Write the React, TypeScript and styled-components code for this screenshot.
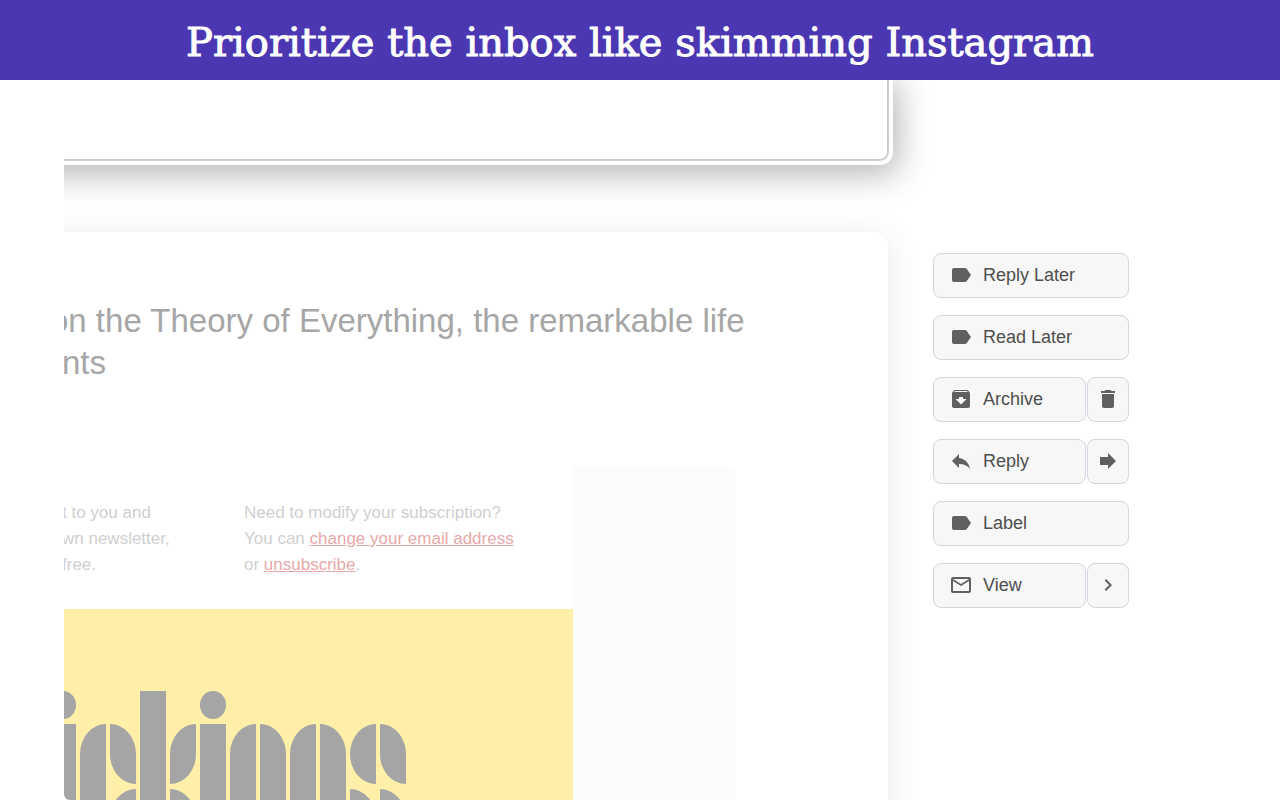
import React from 'react';
import styled, { createGlobalStyle, css } from 'styled-components';
import {
  MdArchive,
  MdChevronRight,
  MdDelete,
  MdForward,
  MdLabel,
  MdMailOutline,
  MdReply,
} from 'react-icons/md';
import type { IconType } from 'react-icons';

const GlobalStyle = createGlobalStyle`
  *, *::before, *::after { box-sizing: border-box; }
  body {
    margin: 0;
    background: #fff;
    font-family: "Liberation Sans", Arial, sans-serif;
  }
`;

const Page = styled.div`
  display: flex;
  flex-direction: column;
  height: 100vh;
  overflow: hidden;
`;

const Banner = styled.header`
  flex: none;
  display: flex;
  align-items: center;
  justify-content: center;
  min-height: 80px;
  padding-top: 4px;
  background: #4c37b3;
  color: #fff;
`;

const BannerTitle = styled.h1`
  margin: 0;
  font: 400 40px/48px "DejaVu Serif", serif;
  -webkit-text-stroke: 1px #fff;
  text-align: center;
`;

const Stage = styled.main`
  flex: 1;
  min-height: 0;
  display: grid;
  grid-template-columns: minmax(0, 1fr) 328px;
  margin: 0 64px;
  overflow: hidden;
  border-bottom-left-radius: 6px;
`;

const Feed = styled.div`
  display: flex;
  flex-direction: column;
  gap: 71px;
`;

/* Cards run past the left edge of the stage, which clips them. */
const SelectedCard = styled.section`
  flex: none;
  height: 81px;
  margin: 0 -1px 0 -80px;
  border: solid #cdcdcd;
  border-width: 0 2px 2px 0;
  border-radius: 0 0 9px 9px;
  background: #fff;
  box-shadow: 0 0 0 4px #fff, 4px 8px 32px 6px rgba(0, 0, 0, 0.28);
`;

const DimmedCard = styled.article`
  flex: none;
  margin-left: -80px;
  padding: 68px 0 0 80px;
  border-radius: 14px;
  background: #fff;
  box-shadow: 0 4px 36px rgba(0, 0, 0, 0.09);
`;

const Subject = styled.h2`
  margin: 0 0 0 -2px;
  padding-bottom: 82px;
  font-weight: 400;
  font-size: 33px;
  line-height: 42px;
  color: #a6a6a6;
  text-indent: -12px;
  white-space: nowrap;
`;

const Letter = styled.div`
  display: grid;
  grid-template-columns: 509px 162px;
`;

const LetterAside = styled.div`
  background: #fcfcfc;
`;

const FinePrint = styled.div`
  display: grid;
  grid-template-columns: 180px 1fr;
  padding: 34px 0 31px;
`;

const Note = styled.p<{ $clipped?: boolean }>`
  margin: 0 0 0 ${(p) => (p.$clipped ? '-2px' : '0')};
  font-size: 17px;
  line-height: 26px;
  color: #cfcfcf;
  white-space: nowrap;
`;

const NoteLink = styled.a`
  color: #e8a9a9;
  text-decoration: underline;
`;

const Artwork = styled.div`
  height: 240px;
  padding-top: 82px;
  background: #ffefa9;
`;

const Wordmark = styled.div`
  display: grid;
  grid-template-columns: repeat(12, 26px);
  column-gap: 4px;
  margin-left: -14px;
`;

const Stroke = styled.div<{ $low?: boolean }>`
  display: flex;
  flex-direction: column;
  gap: 5px;
  height: 158px;
  padding-top: ${(p) => (p.$low ? '33px' : '0')};
`;

type Corner = 'tl' | 'tr' | 'bl' | 'br';
const corners: Record<Corner, string> = {
  tl: 'border-top-left-radius: 26px 30px;',
  tr: 'border-top-right-radius: 26px 30px;',
  bl: 'border-bottom-left-radius: 26px 30px;',
  br: 'border-bottom-right-radius: 26px 30px;',
};

const Piece = styled.div<{ $round?: Corner[]; $kind?: 'dot' | 'leaf' | 'stem' }>`
  background: #a5a5a5;
  ${(p) => (p.$round ?? []).map((c) => corners[c]).join('')}
  ${(p) =>
    p.$kind === 'dot'
      ? css`flex: none; height: 28px; border-radius: 50%;`
      : p.$kind === 'leaf'
        ? css`flex: none; height: 60px;`
        : css`flex: 1;`}
`;

const Actions = styled.nav`
  display: flex;
  flex-direction: column;
  gap: 17px;
  width: 241px;
  padding: 173px 0 0 45px;
`;

const ActionRow = styled.div`
  display: flex;
  gap: 1px;
`;

const ActionButton = styled.button<{ $compact?: boolean }>`
  display: flex;
  align-items: center;
  gap: 10px;
  height: 45px;
  ${(p) =>
    p.$compact
      ? css`flex: 0 0 42px; justify-content: center; padding: 0 1px 2px 0;`
      : css`flex: 1; padding: 0 15px 2px;`}
  border: 1px solid #d6d4e0;
  border-radius: 8px;
  background: #f7f7f7;
  color: #606060;
  font: 400 18px/24px "Liberation Sans", Arial, sans-serif;
  cursor: pointer;

  svg { flex: none; }
`;

const ActionLabel = styled.span`
  color: #4e4e4e;
`;

interface Action {
  label: string;
  icon: IconType;
  extra?: { name: string; icon: IconType };
}

const actions: Action[] = [
  { label: 'Reply Later', icon: MdLabel },
  { label: 'Read Later', icon: MdLabel },
  { label: 'Archive', icon: MdArchive, extra: { name: 'Delete', icon: MdDelete } },
  { label: 'Reply', icon: MdReply, extra: { name: 'Forward', icon: MdForward } },
  { label: 'Label', icon: MdLabel },
  { label: 'View', icon: MdMailOutline, extra: { name: 'More', icon: MdChevronRight } },
];

function Logo() {
  return (
    <Wordmark>
      <Stroke><Piece $kind="dot" /><Piece /></Stroke>
      <Stroke $low><Piece $round={['tl']} /></Stroke>
      <Stroke $low><Piece $kind="leaf" $round={['tr', 'bl']} /><Piece $round={['tl']} /></Stroke>
      <Stroke><Piece /></Stroke>
      <Stroke $low><Piece $kind="leaf" $round={['tl', 'br']} /><Piece $round={['tr']} /></Stroke>
      <Stroke><Piece $kind="dot" /><Piece /></Stroke>
      <Stroke $low><Piece $round={['tl']} /></Stroke>
      <Stroke $low><Piece $round={['tr']} /></Stroke>
      <Stroke $low><Piece $round={['tl']} /></Stroke>
      <Stroke $low><Piece $round={['tr']} /></Stroke>
      <Stroke $low><Piece $kind="leaf" $round={['tl', 'bl']} /><Piece $round={['tr']} /></Stroke>
      <Stroke $low><Piece $kind="leaf" $round={['tr', 'bl']} /><Piece $round={['tr']} /></Stroke>
    </Wordmark>
  );
}

export default function App() {
  return (
    <Page>
      <GlobalStyle />
      <Banner>
        <BannerTitle>Prioritize the inbox like skimming Instagram</BannerTitle>
      </Banner>
      <Stage>
        <Feed>
          <SelectedCard />
          <DimmedCard>
            <Subject>
              on the Theory of Everything, the remarkable life
              <br />
              nts
            </Subject>
            <Letter>
              <div>
                <FinePrint>
                  <Note $clipped>
                    t to you and
                    <br />
                    wn newsletter,
                    <br />
                    free.
                  </Note>
                  <Note>
                    Need to modify your subscription?
                    <br />
                    You can <NoteLink href="#address">change your email address</NoteLink>
                    <br />
                    or <NoteLink href="#unsubscribe">unsubscribe</NoteLink>.
                  </Note>
                </FinePrint>
                <Artwork>
                  <Logo />
                </Artwork>
              </div>
              <LetterAside />
            </Letter>
          </DimmedCard>
        </Feed>
        <Actions>
          {actions.map(({ label, icon: Icon, extra }) => (
            <ActionRow key={label}>
              <ActionButton type="button">
                <Icon size={24} aria-hidden />
                <ActionLabel>{label}</ActionLabel>
              </ActionButton>
              {extra && (
                <ActionButton type="button" $compact aria-label={extra.name}>
                  <extra.icon size={24} aria-hidden />
                </ActionButton>
              )}
            </ActionRow>
          ))}
        </Actions>
      </Stage>
    </Page>
  );
}
